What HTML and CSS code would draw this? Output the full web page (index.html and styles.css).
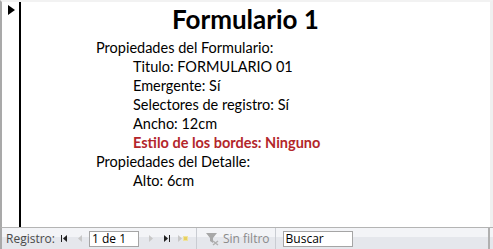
FILE: index.html
```html
<!DOCTYPE html>
<html>
<head>
<meta charset="utf-8">
<title>Formulario 1</title>
<link rel="stylesheet" href="styles.css">
</head>
<body>
<div id="frame">
  <div id="main">
    <div class="selector"><span class="arrow"></span></div>
    <div class="detail">
      <h1>Formulario 1</h1>
      <div class="line">Propiedades del Formulario:</div>
      <div class="line sub">Titulo: FORMULARIO 01</div>
      <div class="line sub">Emergente: Sí</div>
      <div class="line sub">Selectores de registro: Sí</div>
      <div class="line sub">Ancho: 12cm</div>
      <div class="line sub red">Estilo de los bordes: Ninguno</div>
      <div class="line">Propiedades del Detalle:</div>
      <div class="line sub">Alto: 6cm</div>
    </div>
  </div>
  <div id="nav">
    <span class="label">Registro:</span>
    <span class="btn"><svg width="9" height="9" viewBox="0 0 9 9"><rect x="1" y="1" width="1" height="7" fill="#222"/><polygon points="7,1 3,4.5 7,8" fill="#222"/></svg></span>
    <span class="btn"><svg width="9" height="9" viewBox="0 0 9 9"><polygon points="6,1 2,4.5 6,8" fill="#c8c8c8"/></svg></span>
    <span class="box pos">1 de 1</span>
    <span class="btn"><svg width="9" height="9" viewBox="0 0 9 9"><polygon points="3,1 7,4.5 3,8" fill="#c8c8c8"/></svg></span>
    <span class="btn"><svg width="9" height="9" viewBox="0 0 9 9"><polygon points="2,1 6,4.5 2,8" fill="#222"/><rect x="7" y="1" width="1" height="7" fill="#222"/></svg></span>
    <span class="btn"><svg width="12" height="9" viewBox="0 0 12 9"><polygon points="1,1 5,4.5 1,8" fill="#c8c8c8"/><rect x="6" y="2" width="5" height="5" fill="#efe3a0"/><rect x="7" y="3" width="3" height="3" fill="#e8d060"/></svg></span>
    <span class="sep"></span>
    <span class="filter"><svg width="15" height="14" viewBox="0 0 15 14"><polygon points="1,1 12,1 8,6 8,11 5,9 5,6" fill="#a8a8a8"/><path d="M8 9 L13 13 M13 9 L8 13" stroke="#b0b0b0" stroke-width="1.5"/></svg>Sin filtro</span>
    <span class="sep"></span>
    <span class="box search">Buscar</span>
    <span class="fill"></span>
  </div>
</div>
</body>
</html>
```

FILE: styles.css
```css
html, body {
	margin: 0;
	padding: 0;
	background: #fff;
}
#frame {
	width: 493px;
	height: 249px;
	display: flex;
	flex-direction: column;
	box-sizing: border-box;
}
#main {
	flex: 1;
	display: flex;
	border-left: 2px solid #a9a9a9;
	border-right: 3px solid #f0f0f0;
	border-top: 2px solid #f2f2f2;
}
#main .selector {
	width: 17px;
	border-right: 2px solid #000;
	position: relative;
}
#main .selector .arrow {
	position: absolute;
	left: 6px;
	top: 3px;
	width: 0;
	height: 0;
	border-top: 5px solid transparent;
	border-bottom: 5px solid transparent;
	border-left: 7px solid #000;
}
#main .detail {
	flex: 1;
	padding-left: 75px;
	font-family: Lato, "Open Sans", sans-serif;
	font-size: 14.5px;
	color: #000;
}
#main .detail h1 {
	margin: 1px 0 3px 76px;
	font-size: 26px;
	line-height: 32px;
	font-weight: bold;
}
#main .detail .line {
	line-height: 19px;
}
#main .detail .sub {
	padding-left: 37px;
}
#main .detail .red {
	color: #b3262b;
	font-weight: bold;
}
#nav {
	height: 21px;
	display: flex;
	align-items: center;
	border-top: 1px solid #b4b4b4;
	border-left: 2px solid #a9a9a9;
	background: linear-gradient(to bottom, #f3f4f7 0, #f3f4f7 45%, #e5e7ec 45%, #e5e7ec 100%);
	font-family: "Open Sans", "DejaVu Sans", sans-serif;
	font-size: 12px;
	color: #4a4a4a;
}
#nav .label {
	margin-left: 4px;
	margin-right: 2px;
}
#nav .btn {
	display: flex;
	align-items: center;
	justify-content: center;
	width: 16px;
	height: 16px;
}
#nav .box {
	height: 16px;
	box-sizing: border-box;
	border: 1px solid #a5a5a5;
	background: #fff;
	color: #000;
	line-height: 14px;
	padding-left: 2px;
}
#nav .pos {
	width: 50px;
	margin-right: 4px;
}
#nav .sep {
	width: 1px;
	height: 21px;
	background: #c9ccd2;
	margin: 0 7px 0 5px;
}
#nav .filter {
	display: flex;
	align-items: center;
	color: #8a8a8a;
	margin-left: 1px;
	margin-right: 0;
}
#nav .filter svg {
	margin-right: 3px;
}
#nav .search {
	width: 70px;
}
#nav .fill {
	flex: 1;
	height: 21px;
	border-right: 2px solid #b0b0b0;
	margin-right: 3px;
}
```
